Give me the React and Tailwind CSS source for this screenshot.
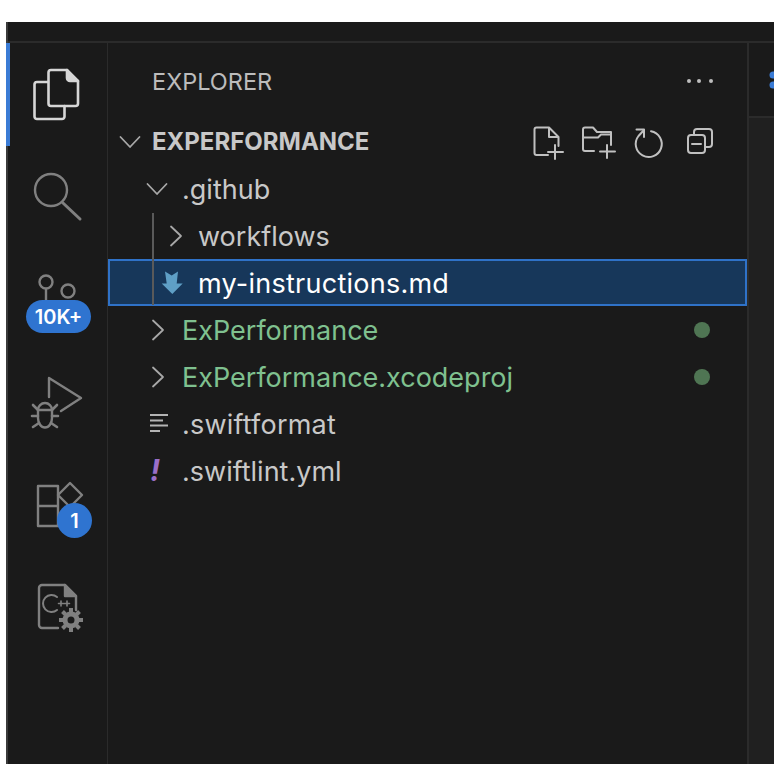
import React from "react";

const font = { fontFamily: "Inter, 'Noto Sans', sans-serif" };

// Svg drawn in page coordinates so the viewBox lines up with the slot it sits in
const Slot = ({ index, children }) => {
  const top = 43 + index * 102;
  return (
    <div className="h-[102px] w-full shrink-0">
      <svg width="99" height="102" viewBox={`8 ${top} 99 102`} fill="none" stroke="#808080" strokeWidth="2.4" strokeLinejoin="round" strokeLinecap="round">
        {children}
      </svg>
    </div>
  );
};

const ActivityBar = () => (
  <div className="relative w-[99px] shrink-0">
    <div className="absolute left-[-2px] top-0 h-[103px] w-[4px] bg-[#3a7bd5]" />
    <Slot index={0}>
      <g stroke="#d6d6d6" strokeWidth="2.6">
        <path d="M48 82H37a2.5 2.5 0 0 0-2.5 2.5V116.500a2.500 2.500 0 0 0 2.500 2.500H62a2.500 2.500 0 0 0 2.500-2.500V106" />
        <path d="M51 70H67L78 81V103.500A2.500 2.500 0 0 1 75.500 106H51a2.500 2.500 0 0 1-2.500-2.500V72.500A2.500 2.500 0 0 1 51 70Z" />
        <path d="M67 70V78A3 3 0 0 0 70 81H78" />
      </g>
      <path d="M67 71L77 81H70A3 3 0 0 1 67 78Z" fill="#d6d6d6" stroke="none" />
    </Slot>
    <Slot index={1}>
      <circle cx="51" cy="190" r="16" />
      <path d="M63 203L80 219" strokeWidth="3" />
    </Slot>
    <Slot index={2}>
      <circle cx="46" cy="282" r="6.500" />
      <path d="M46 289V302" />
      <circle cx="68" cy="291" r="6.500" />
    </Slot>
    <Slot index={3}>
      <path d="M49 397V378L81 398L61 411" />
      <path d="M38 410A7 7 0 0 1 52 410Z" />
      <path d="M38 410V418A7 9.500 0 0 0 52 418V410" />
      <path d="M33 405L38 410M57 405L52 410M32 416H38M58 416H52M33 427L39 423M57 427L51 423" strokeWidth="2.600" />
    </Slot>
    <Slot index={4}>
      <path d="M38 486H58V526H38ZM38 506H58" />
      <path d="M70 483L82 495L70 507L58 495Z" />
    </Slot>
    <Slot index={5}>
      <path d="M76 610V596L65 585H42a3 3 0 0 0-3 3V625a3 3 0 0 0 3 3H58" />
      <path d="M65 585L76 596H65Z" fill="#808080" />
      <path d="M57 597A8.500 8.500 0 1 0 57 610" strokeWidth="2" />
      <path d="M58.500 603.500H63.500M61 601V606M64.500 603.500H69.500M67 601V606" strokeWidth="1.600" />
      <circle cx="71" cy="620" r="6" strokeWidth="5" />
      <path d="M71 608V612M71 628V632M59 620H63M79 620H83M62.500 611.500L65.500 614.500M76.500 625.500L79.500 628.500M62.500 628.500L65.500 625.500M76.500 614.500L79.500 611.500" strokeWidth="4" strokeLinecap="butt" />
    </Slot>
    <div className="absolute left-[18px] top-[257px] flex h-[33px] w-[65px] items-center justify-center rounded-full bg-[#2f74d0] text-[20px] font-semibold text-white">10K+</div>
    <div className="absolute left-[49px] top-[460px] flex h-[35px] w-[35px] items-center justify-center rounded-full bg-[#2f74d0] text-[20px] font-semibold text-white">1</div>
  </div>
);

const Chevron = ({ open, color = "#a8a8a8" }) => (
  <svg width="24" height="24" viewBox="0 0 24 24" fill="none" stroke={color} strokeWidth="1.800" strokeLinecap="round" strokeLinejoin="round">
    {open ? <path d="M2.500 7L12 17L21.500 7" /> : <path d="M7 2.500L17 12L7 21.500" />}
  </svg>
);

const HeaderActions = () => (
  <div className="ml-auto mr-[31px] flex items-center">
    <svg width="184" height="40" viewBox="532 122 184 40" fill="none" stroke="#c0c0c0" strokeWidth="2" strokeLinejoin="round" strokeLinecap="round">
      <path d="M548 155H536.500A2 2 0 0 1 534.500 153V129.500A2 2 0 0 1 536.500 127.500H549L558.500 137V146" />
      <path d="M549 128V137H558" />
      <path d="M555 145V159M548 152H563" />
      <path d="M594 151H585A2 2 0 0 1 583 149V129.500A2 2 0 0 1 585 127.500H593L597 132H611V145" />
      <path d="M583 137.500H598L601 134.500H611" />
      <path d="M607 145V158M600 151.500H615" />
      <path d="M651 131.200A13 13 0 1 1 638.500 136L644 130" />
      <path d="M636.500 129.500H644V137" />
      <rect x="688" y="135" width="17" height="18" rx="3" />
      <path d="M694 135V132A3 3 0 0 1 697 129H709A3 3 0 0 1 712 132V144A3 3 0 0 1 709 147H705" />
      <path d="M692 144H701" />
    </svg>
  </div>
);

const rowIcon = {
  md: (
    <svg width="24" height="26" viewBox="0 0 24 26" fill="#5f9fc6">
      <path d="M5 1.500L11.700 5.500L18 1.500L16.700 13.500H22.700L12.300 24L1.700 13.500H6.700Z" />
    </svg>
  ),
  lines: (
    <svg width="20" height="22" viewBox="0 0 20 22" stroke="#b4b4b4" strokeWidth="2">
      <path d="M0 2H18M0 7.500H13M0 12.500H18M0 18H10" />
    </svg>
  ),
};

const rows = [
  { name: ".github", pl: "pl-[37px]", box: "w-[37px]", icon: <Chevron open />, color: "text-[#c8c8c8]" },
  { name: "workflows", pl: "pl-[56px]", box: "w-[34px]", icon: <Chevron />, color: "text-[#c8c8c8]" },
  { name: "my-instructions.md", pl: "pl-[52px]", box: "w-[38px]", icon: rowIcon.md, color: "text-white tracking-[0.25px]", selected: true },
  { name: "ExPerformance", pl: "pl-[38px]", box: "w-[36px]", icon: <Chevron />, color: "text-[#7fc18f]", dot: true },
  { name: "ExPerformance.xcodeproj", pl: "pl-[38px]", box: "w-[36px]", icon: <Chevron />, color: "text-[#7fc18f]", dot: true },
  { name: ".swiftformat", pl: "pl-[42px]", box: "w-[32px]", icon: rowIcon.lines, color: "text-[#c8c8c8] tracking-[0.2px]" },
  { name: ".swiftlint.yml", pl: "pl-[42px]", box: "w-[32px]", icon: <span className="pb-[2px] text-[30px] font-bold italic leading-none text-[#9a6fc8]">!</span>, color: "text-[#c8c8c8]" },
];

const Sidebar = () => (
  <div className="flex-1">
    <div className="flex h-[75px] items-center justify-between pl-[44px] pr-[33px]">
      <span className="pt-[2px] text-[23.500px] text-[#bcbcbc]">EXPLORER</span>
      <svg width="28" height="6" viewBox="0 0 28 6" fill="#bdbdbd">
        <circle cx="3" cy="3" r="2" />
        <circle cx="13" cy="3" r="2" />
        <circle cx="25" cy="3" r="2" />
      </svg>
    </div>
    <div className="flex h-[47px] items-center pl-[10px]">
      <div className="flex w-[34px] shrink-0 items-center"><Chevron open /></div>
      <span className="pt-[1px] text-[24px] font-bold text-[#c8c8c8]">EXPERFORMANCE</span>
      <HeaderActions />
    </div>
    <div className="relative">
      {rows.map((row) => (
        <div
          key={row.name}
          className={`flex h-[47px] items-center ${row.pl} ${row.selected ? "bg-[#17375a] outline-2 -outline-offset-2 outline-[#2f72c8]" : ""}`}
        >
          <div className={`flex ${row.box} shrink-0 items-center`}>{row.icon}</div>
          <span className={`pt-[3px] text-[27px] ${row.color}`}>{row.name}</span>
          {row.dot && <span className="ml-auto mr-[37px] h-[16px] w-[16px] rounded-full bg-[#4f7553]" />}
        </div>
      ))}
      <div className="absolute left-[44px] top-[48px] h-[92px] w-[2px] bg-[#5a5a5a]" />
    </div>
  </div>
);

const EditorEdge = () => (
  <div className="w-[27px] shrink-0 border-l-2 border-[#2b2b2b] bg-[#202020]">
    <div className="flex h-[75px] items-center overflow-hidden border-b-2 border-[#2b2b2b] bg-[#1a1a1a] pl-[19px]">
      <svg width="6" height="18" viewBox="0 0 6 18" className="shrink-0" fill="#3a7bd5">
        <circle cx="5" cy="4" r="3.500" />
        <circle cx="5" cy="14" r="3.500" />
      </svg>
    </div>
  </div>
);

export default function App() {
  return (
    <div className="h-[764px] w-[774px] overflow-hidden bg-white pl-[6px] pt-[22px]" style={font}>
      <div className="flex h-full flex-col border-l-2 border-[#3a3a3a] bg-[#1a1a1a]">
        <div className="h-[21px] shrink-0 border-b-2 border-[#2b2b2b] bg-[#1a1a1a]" />
        <div className="flex flex-1">
          <ActivityBar />
          <div className="flex flex-1 border-l border-[#2b2b2b]">
            <Sidebar />
            <EditorEdge />
          </div>
        </div>
      </div>
    </div>
  );
}
